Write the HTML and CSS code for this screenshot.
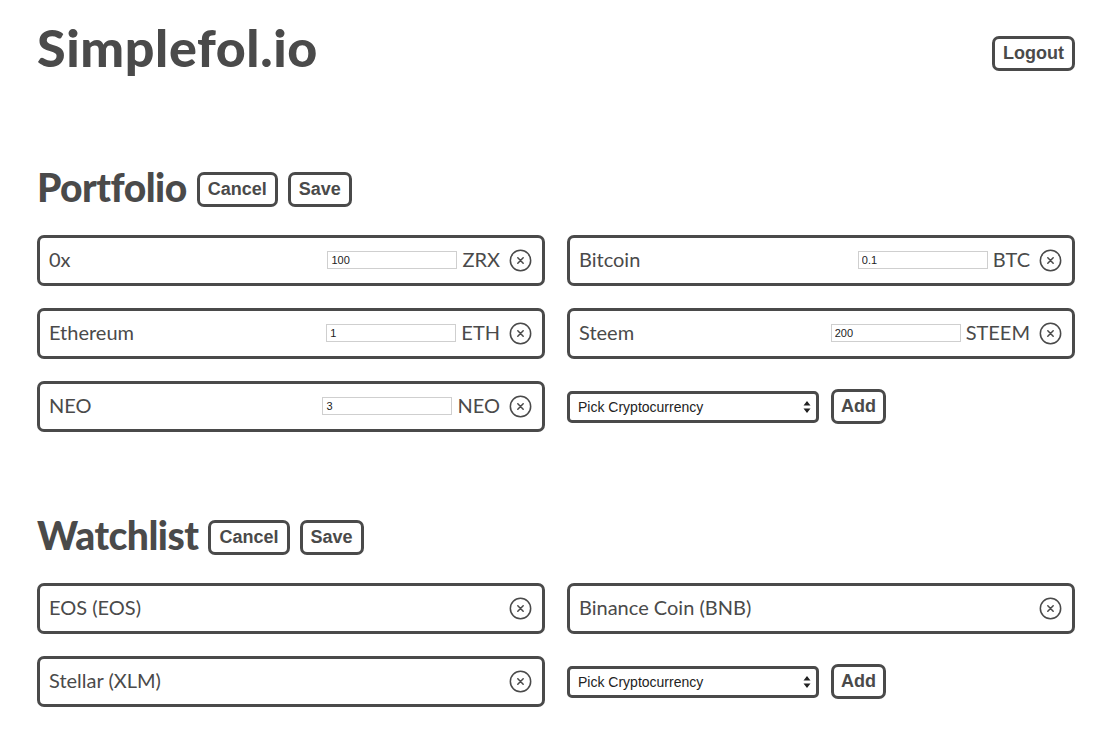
FILE: index.html
```html
<!DOCTYPE html>
<html lang="en">
<head>
<meta charset="utf-8">
<title>Simplefol.io</title>
<link rel="stylesheet" href="styles.css">
</head>
<body>
<div class="page">
  <header class="top">
    <h1 class="brand">Simplefol.io</h1>
    <button class="btn">Logout</button>
  </header>

  <section class="panel panel-portfolio">
    <div class="panel-head">
      <h2 class="panel-title">Portfolio</h2>
      <button class="btn">Cancel</button>
      <button class="btn">Save</button>
    </div>
    <div class="grid">
      <div class="item">
        <span class="item-name">0x</span>
        <input class="qty" type="text" value="100">
        <span class="ticker">ZRX</span>
        <svg class="remove" viewBox="0 0 24 24"><circle cx="12" cy="12" r="10.6"/><path d="M9.2 9.2 14.8 14.8M14.8 9.2 9.2 14.8"/></svg>
      </div>
      <div class="item">
        <span class="item-name">Bitcoin</span>
        <input class="qty" type="text" value="0.1">
        <span class="ticker">BTC</span>
        <svg class="remove" viewBox="0 0 24 24"><circle cx="12" cy="12" r="10.6"/><path d="M9.2 9.2 14.8 14.8M14.8 9.2 9.2 14.8"/></svg>
      </div>
      <div class="item">
        <span class="item-name">Ethereum</span>
        <input class="qty" type="text" value="1">
        <span class="ticker">ETH</span>
        <svg class="remove" viewBox="0 0 24 24"><circle cx="12" cy="12" r="10.6"/><path d="M9.2 9.2 14.8 14.8M14.8 9.2 9.2 14.8"/></svg>
      </div>
      <div class="item">
        <span class="item-name">Steem</span>
        <input class="qty" type="text" value="200">
        <span class="ticker">STEEM</span>
        <svg class="remove" viewBox="0 0 24 24"><circle cx="12" cy="12" r="10.6"/><path d="M9.2 9.2 14.8 14.8M14.8 9.2 9.2 14.8"/></svg>
      </div>
      <div class="item">
        <span class="item-name">NEO</span>
        <input class="qty" type="text" value="3">
        <span class="ticker">NEO</span>
        <svg class="remove" viewBox="0 0 24 24"><circle cx="12" cy="12" r="10.6"/><path d="M9.2 9.2 14.8 14.8M14.8 9.2 9.2 14.8"/></svg>
      </div>
      <div class="adder">
        <select class="picker"><option>Pick Cryptocurrency</option></select>
        <button class="btn btn-add">Add</button>
      </div>
    </div>
  </section>

  <section class="panel panel-watch">
    <div class="panel-head">
      <h2 class="panel-title">Watchlist</h2>
      <button class="btn">Cancel</button>
      <button class="btn">Save</button>
    </div>
    <div class="grid">
      <div class="item">
        <span class="item-name">EOS (EOS)</span>
        <svg class="remove" viewBox="0 0 24 24"><circle cx="12" cy="12" r="10.6"/><path d="M9.2 9.2 14.8 14.8M14.8 9.2 9.2 14.8"/></svg>
      </div>
      <div class="item">
        <span class="item-name">Binance Coin (BNB)</span>
        <svg class="remove" viewBox="0 0 24 24"><circle cx="12" cy="12" r="10.6"/><path d="M9.2 9.2 14.8 14.8M14.8 9.2 9.2 14.8"/></svg>
      </div>
      <div class="item">
        <span class="item-name">Stellar (XLM)</span>
        <svg class="remove" viewBox="0 0 24 24"><circle cx="12" cy="12" r="10.6"/><path d="M9.2 9.2 14.8 14.8M14.8 9.2 9.2 14.8"/></svg>
      </div>
      <div class="adder">
        <select class="picker"><option>Pick Cryptocurrency</option></select>
        <button class="btn btn-add">Add</button>
      </div>
    </div>
  </section>
</div>
</body>
</html>
```
FILE: styles.css
```css
* { box-sizing: border-box; }

html, body {
  margin: 0;
  background: #ffffff;
  color: #4a4a4a;
  font-family: Lato, "Open Sans", sans-serif;
}

.page {
  padding: 21px 43px 0 37px;
}

.top {
  display: flex;
  justify-content: space-between;
  align-items: flex-start;
}

.brand {
  margin: 0;
  font-size: 52px;
  line-height: 52px;
  font-weight: 900;
  letter-spacing: 0.6px;
}

.top .btn {
  margin-top: 15px;
}

.btn {
  font-family: "Liberation Sans", Arial, sans-serif;
  font-weight: 700;
  font-size: 18px;
  line-height: 23px;
  color: #4a4a4a;
  background: #fff;
  border: 3px solid #4a4a4a;
  border-radius: 7px;
  padding: 3px 8px 3px;
  cursor: pointer;
}

.panel-portfolio { margin-top: 93px; }
.panel-watch { margin-top: 82px; }

.panel-head {
  display: flex;
  align-items: center;
  gap: 10px;
  height: 42px;
  margin-bottom: 27px;
}

.panel-title {
  margin: 0 0 0 0;
  font-size: 39px;
  line-height: 42px;
  font-weight: 900;
  letter-spacing: -0.5px;
}

.panel-head .btn { margin-top: 5px; }

.grid {
  display: grid;
  grid-template-columns: 1fr 1fr;
  column-gap: 22px;
  row-gap: 22px;
}

.item {
  display: flex;
  align-items: center;
  height: 51px;
  border: 3px solid #4a4a4a;
  border-radius: 7px;
  padding: 0 10px 0 9px;
  font-size: 20px;
}

.item-name,
.ticker {
  white-space: nowrap;
  line-height: 24px;
  padding-bottom: 3px;
}

.item-name {
  flex: 1;
}

.qty {
  width: 130px;
  height: 18px;
  border: 1px solid #cfcfcf;
  padding: 0 3px;
  font-family: "Liberation Sans", Arial, sans-serif;
  font-size: 11px;
  color: #222;
  margin: 0 5px 1px 0;
}

.remove {
  width: 23px;
  height: 23px;
  margin-left: 9px;
  fill: none;
  stroke: #4a4a4a;
  stroke-width: 1.6;
  stroke-linecap: round;
  flex: none;
}

.adder {
  display: flex;
  align-items: center;
  gap: 12px;
}

.picker {
  -webkit-appearance: none;
  appearance: none;
  width: 252px;
  height: 32px;
  border: 3px solid #4a4a4a;
  border-radius: 5px;
  padding: 0 8px;
  font-family: "Liberation Sans", Arial, sans-serif;
  font-size: 14px;
  color: #222;
  background: #fff url("data:image/svg+xml;utf8,<svg xmlns='http://www.w3.org/2000/svg' width='8' height='14' viewBox='0 0 8 14'><path d='M4 1 7.5 5.5H0.5Z M4 13 7.5 8.5H0.5Z' fill='%23222'/></svg>") no-repeat right 5px center;
}

.btn-add {
  padding: 3px 7px;
}
```
